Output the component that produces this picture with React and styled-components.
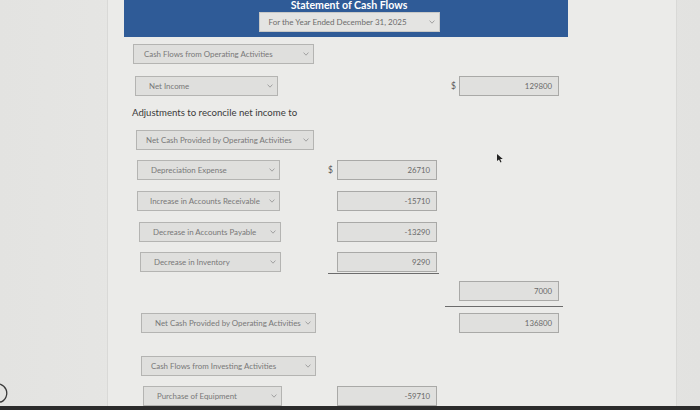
import React from "react";
import styled, { createGlobalStyle } from "styled-components";

const Global = createGlobalStyle`
  html, body { margin: 0; padding: 0; }
  body { font-family: Lato, "Noto Sans", sans-serif; background: #e6e6e4; }
`;

const Page = styled.div`
  width: 700px;
  height: 410px;
  overflow: hidden;
  display: flex;
  flex-direction: column;
  background: linear-gradient(90deg, #e3e3e1 0%, #e9e9e7 40%, #e8e8e6 70%, #e2e2e0 100%);
  position: relative;
`;

const Panel = styled.div`
  flex: 1;
  margin-left: 107px;
  width: 568px;
  border-left: 1px solid #d9d9d7;
  border-right: 1px solid #d9d9d7;
  background: #ebebe9;
  display: flex;
  flex-direction: column;
`;

const Header = styled.div`
  margin-left: 16px;
  width: 444px;
  height: 37px;
  background: #2f5b97;
  display: flex;
  flex-direction: column;
  align-items: center;
  padding-left: 6px;
  box-sizing: border-box;
`;

const Title = styled.div`
  color: #ffffff;
  font-weight: 700;
  font-size: 10.6px;
  line-height: 11px;
  margin-top: 0;
`;

const HeaderSelect = styled.div`
  margin-top: 1px;
  width: 181px;
  height: 20px;
  box-sizing: border-box;
  background: #e4e4e2;
  border: 1px solid #c9c9c7;
  display: flex;
  align-items: center;
  padding: 0 4px 0 9px;
  font-size: 8px;
  color: #6c6c6c;
  justify-content: space-between;
`;

const Row = styled.div`
  display: grid;
  grid-template-columns: 212px 17px 100px 12px 10px 100px;
  height: 20px;
  margin-top: ${(p) => p.$mt}px;
`;

const SelectBox = styled.div`
  grid-column: 1;
  margin-left: ${(p) => p.$x - 108}px;
  width: ${(p) => p.$w}px;
  height: 20px;
  box-sizing: border-box;
  background: #dfdfdd;
  border: 1px solid #b4b4b2;
  display: flex;
  align-items: center;
  justify-content: space-between;
  padding: 0 4px 0 ${(p) => p.$pl || 11}px;
  font-size: 7.9px;
  color: #787878;
  white-space: nowrap;
  overflow: hidden;
`;

const Dollar = styled.div`
  grid-column: ${(p) => p.$col};
  font-size: 8.5px;
  color: #555;
  display: flex;
  align-items: center;
  padding-left: ${(p) => p.$pl}px;
`;

const Amount = styled.div`
  grid-column: ${(p) => p.$col};
  height: 20px;
  box-sizing: border-box;
  background: #e0e0de;
  border: 1px solid #a9a9a7;
  display: flex;
  align-items: center;
  justify-content: flex-end;
  padding-right: 6px;
  font-size: 7.8px;
  color: #6a6a6a;
  position: relative;
  &::after {
    content: "";
    display: ${(p) => (p.$rule ? "block" : "none")};
    position: absolute;
    left: ${(p) => (p.$col === 3 ? -10 : -15)}px;
    right: ${(p) => (p.$col === 3 ? -3 : -5)}px;
    bottom: ${(p) => (p.$col === 3 ? -3 : -7)}px;
    height: 1px;
    background: #6c6c6c;
  }
`;

const Note = styled.div`
  margin-top: 11px;
  margin-left: 24px;
  font-size: 9.6px;
  color: #3a3a3a;
  line-height: 12px;
`;

const Bezel = styled.div`
  height: 4px;
  background: #2b2b2b;
`;

const Chev = () => (
  <svg width="6" height="4" viewBox="0 0 6 4" style={{ flex: "none" }}>
    <path d="M0.6 0.6 L3 3.2 L5.4 0.6" fill="none" stroke="#9a9a9a" strokeWidth="0.9" />
  </svg>
);

const Select = ({ x, w, pl, children }) => (
  <SelectBox $x={x} $w={w} $pl={pl}>
    <span>{children}</span>
    <Chev />
  </SelectBox>
);

const Cursor = styled.svg`
  position: absolute;
  left: 496px;
  top: 153px;
`;

const EdgeArc = styled.svg`
  position: absolute;
  left: 0;
  top: 382px;
`;

export default function App() {
  return (
    <Page>
      <Global />
      <Panel>
        <Header>
          <Title>Statement of Cash Flows</Title>
          <HeaderSelect>
            <span>For the Year Ended December 31, 2025</span>
            <Chev />
          </HeaderSelect>
        </Header>

        <Row $mt={7}>
          <Select x={133} w={181} pl={10}>Cash Flows from Operating Activities</Select>
        </Row>

        <Row $mt={12}>
          <Select x={135} w={143} pl={13}>Net Income</Select>
          <Dollar $col={5} $pl={2}>$</Dollar>
          <Amount $col={6}>129800</Amount>
        </Row>

        <Note>Adjustments to reconcile net income to</Note>

        <Row $mt={11}>
          <Select x={136} w={178} pl={9}>Net Cash Provided by Operating Activities</Select>
        </Row>

        <Row $mt={10}>
          <Select x={137} w={143} pl={13}>Depreciation Expense</Select>
          <Dollar $col={2} $pl={8}>$</Dollar>
          <Amount $col={3}>26710</Amount>
        </Row>

        <Row $mt={11}>
          <Select x={137} w={143} pl={12}>Increase in Accounts Receivable</Select>
          <Amount $col={3}>-15710</Amount>
        </Row>

        <Row $mt={11}>
          <Select x={139} w={142} pl={13}>Decrease in Accounts Payable</Select>
          <Amount $col={3}>-13290</Amount>
        </Row>

        <Row $mt={10}>
          <Select x={140} w={141} pl={13}>Decrease in Inventory</Select>
          <Amount $col={3} $rule>9290</Amount>
        </Row>

        <Row $mt={9}>
          <Amount $col={6} $rule>7000</Amount>
        </Row>

        <Row $mt={12}>
          <Select x={141} w={175} pl={13}>Net Cash Provided by Operating Activities</Select>
          <Amount $col={6}>136800</Amount>
        </Row>

        <Row $mt={23}>
          <Select x={141} w={175} pl={9}>Cash Flows from Investing Activities</Select>
        </Row>

        <Row $mt={10}>
          <Select x={143} w={139} pl={13}>Purchase of Equipment</Select>
          <Amount $col={3}>-59710</Amount>
        </Row>
      </Panel>
      <Bezel />
      <Cursor width="8" height="10" viewBox="0 0 8 10">
        <path d="M1 1 L1 8 L3 6.5 L4.5 9.5 L5.5 9 L4.2 6 L6.8 6 Z" fill="#222" />
      </Cursor>
      <EdgeArc width="10" height="22" viewBox="0 0 10 22">
        <path d="M0 2 C6 4 8 10 6 15 C5 18 2 20 0 20" fill="none" stroke="#3a3a3a" strokeWidth="1.3" />
      </EdgeArc>
    </Page>
  );
}
